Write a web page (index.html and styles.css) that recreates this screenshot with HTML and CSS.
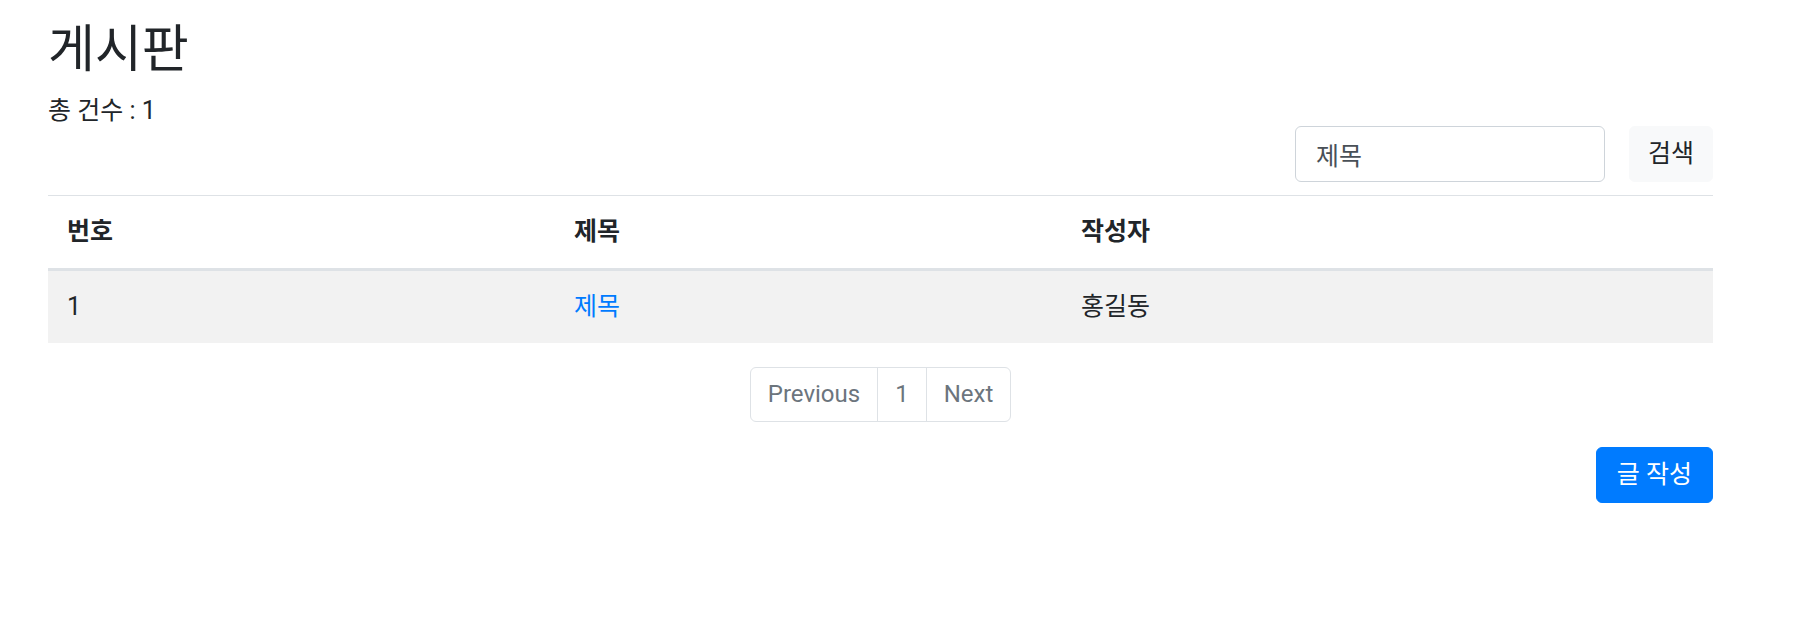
FILE: index.html
```html
<!DOCTYPE html>
<html lang="ko">
<head>
<meta charset="utf-8">
<title>게시판</title>
<link rel="stylesheet" href="styles.css">
</head>
<body>
<div class="container">
  <h2 class="title">게시판</h2>
  <div class="count">총 건수 : 1</div>
  <form class="search">
    <input class="search-input" type="text" value="제목">
    <button type="button" class="btn btn-light">검색</button>
  </form>
  <table class="board">
    <thead>
      <tr>
        <th class="col-no">번호</th>
        <th class="col-title">제목</th>
        <th class="col-writer">작성자</th>
      </tr>
    </thead>
    <tbody>
      <tr>
        <td>1</td>
        <td><a href="#">제목</a></td>
        <td>홍길동</td>
      </tr>
    </tbody>
  </table>
  <nav class="pager">
    <ul class="pagination">
      <li><a href="#" class="page-link first">Previous</a></li>
      <li><a href="#" class="page-link">1</a></li>
      <li><a href="#" class="page-link last">Next</a></li>
    </ul>
  </nav>
  <div class="actions">
    <button type="button" class="btn btn-primary">글 작성</button>
  </div>
</div>
</body>
</html>
```

FILE: styles.css
```css
* { box-sizing: border-box; }
html, body { margin: 0; padding: 0; background: #fff; }
body {
  font-family: Roboto, "Noto Sans CJK KR", sans-serif;
  font-size: 25px;
  line-height: 1.5;
  color: #212529;
}
.container {
  width: 1665px;
  margin-left: 48px;
  padding-top: 20px;
}
.title {
  margin: 0;
  font-size: 51px;
  font-weight: 400;
  line-height: 60px;
}
.count {
  margin-top: 13px;
  line-height: 36px;
}
.search {
  display: flex;
  justify-content: flex-end;
  gap: 24px;
  margin: -3px 0 0;
}
.search-input {
  width: 310px;
  height: 56px;
  padding: 0 20px;
  font: inherit;
  color: #495057;
  border: 1px solid #ced4da;
  border-radius: 6px;
  outline: none;
}
.btn {
  font: inherit;
  height: 56px;
  padding: 0 20px;
  border: 1px solid transparent;
  border-radius: 6px;
  cursor: pointer;
}
.btn-light { background: #f8f9fa; color: #212529; border-color: #f8f9fa; padding: 0 18px; }
.btn-primary { background: #007bff; color: #fff; border-color: #007bff; }
.board {
  width: 100%;
  margin-top: 13px;
  border-collapse: collapse;
}
.board th, .board td {
  text-align: left;
  padding: 18px 19px;
  line-height: 36px;
  border-top: 1px solid #dee2e6;
}
.board th { font-weight: 700; border-bottom: 3px solid #dee2e6; }
.board tbody tr { background: #f2f2f2; }
.board tbody td { border-top: none; }
.col-no { width: 507px; }
.col-title { width: 507px; }
.board a { color: #007bff; text-decoration: none; }
.pager {
  display: flex;
  justify-content: center;
  margin-top: 24px;
}
.pagination {
  display: flex;
  list-style: none;
  margin: 0;
  padding: 0;
}
.page-link {
  display: block;
  padding: 11px 17px;
  font-size: 24px;
  line-height: 31px;
  color: #6c757d;
  text-decoration: none;
  border: 1px solid #dee2e6;
  margin-left: -1px;
}
.page-link.first { margin-left: 0; border-radius: 6px 0 0 6px; }
.page-link.last { border-radius: 0 6px 6px 0; }
.actions {
  display: flex;
  justify-content: flex-end;
  margin-top: 25px;
}
```
